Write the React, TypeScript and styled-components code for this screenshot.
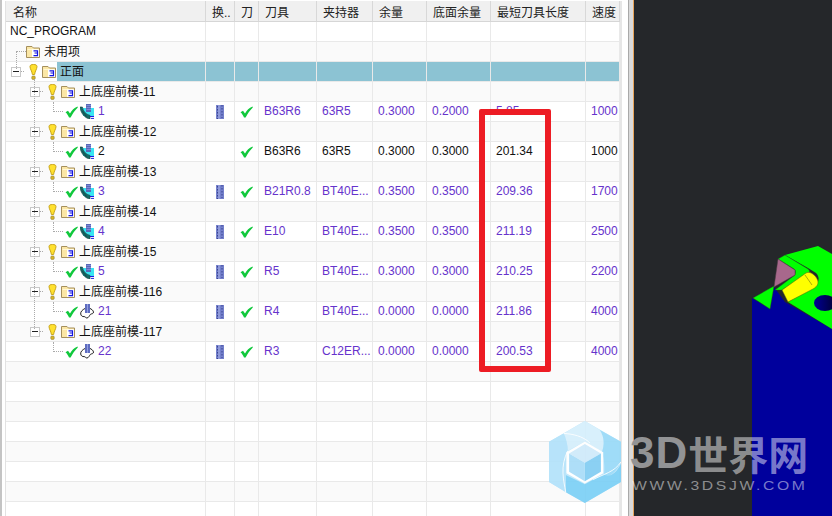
import styled, { createGlobalStyle } from "styled-components";

const GlobalStyle = createGlobalStyle`
  html, body {
    margin: 0;
    padding: 0;
    width: 832px;
    height: 516px;
    overflow: hidden;
    background: #fff;
  }
`;

const Page = styled.div`
  display: flex;
  position: relative;
  width: 832px;
  height: 516px;
  overflow: hidden;
  font-family: "Liberation Sans", "Noto Sans CJK SC", sans-serif;
  font-size: 12px;
  color: #111;
`;

const TablePane = styled.div`
  width: 628px;
  height: 516px;
  flex: none;
  box-sizing: border-box;
  border-left: 2px solid #c4c4c4;
  padding: 1px 6px 0 3px;
  background: #fff;
`;

const Table = styled.div`
  position: relative;
  height: 100%;
  overflow: hidden;
  border-left: 1px solid #e2e2e2;
  border-right: 2px solid #e6e6e6;
`;

const Sash = styled.div`
  width: 5px;
  flex: none;
  background: #dadada;
  border-left: 1px solid #a9a9a9;
  box-sizing: border-box;
`;

const Viewport = styled.div`
  flex: 1;
  background: #25272a;
  border-left: 1px solid #e8a45a;
  min-width: 0;

  > svg {
    display: block;
    width: 100%;
    height: 100%;
  }
`;

const columns = "200px 29px 24px 58px 56px 54px 64px 95px 34px";

const HeaderRow = styled.div`
  display: grid;
  grid-template-columns: ${columns};
  height: 21px;
  box-sizing: border-box;
  background: #f0f0f0;
  border-bottom: 1px solid #d6d6d6;
`;

const HeaderCell = styled.div`
  display: flex;
  align-items: center;
  padding-left: 6px;
  border-right: 1px solid #d8d8d8;
  box-sizing: border-box;
  white-space: nowrap;
  overflow: hidden;
  color: #222;

  &:first-child {
    padding-left: 7px;
  }
`;

const Row = styled.div<{ $odd: boolean }>`
  display: grid;
  grid-template-columns: ${columns};
  height: 20px;
  box-sizing: border-box;
  border-bottom: 1px solid #e9e9e9;
  background: ${(p) => (p.$odd ? "#fafafa" : "#fff")};
`;

const Cell = styled.div<{ $selected?: boolean; $active?: boolean }>`
  display: flex;
  align-items: center;
  padding: 0 0 2px 5px;
  box-sizing: border-box;
  border-right: 1px solid #e9e9e9;
  white-space: nowrap;
  overflow: hidden;
  color: ${(p) => (p.$active ? "#6633cc" : "#111")};
  background: ${(p) => (p.$selected ? "#8cc3d3" : "transparent")};
`;

const IconCell = styled.div<{ $selected?: boolean }>`
  display: flex;
  align-items: center;
  justify-content: center;
  box-sizing: border-box;
  border-right: 1px solid #e9e9e9;
  background: ${(p) => (p.$selected ? "#8cc3d3" : "transparent")};
`;

const NameCell = styled.div<{ $indent: number }>`
  display: flex;
  align-items: center;
  height: 19px;
  padding-left: ${(p) => p.$indent}px;
  box-sizing: border-box;
  border-right: 1px solid #e9e9e9;
  white-space: nowrap;
  overflow: hidden;
`;

const NameLabel = styled.span<{ $selected?: boolean; $active?: boolean }>`
  flex: 1;
  align-self: stretch;
  display: flex;
  align-items: center;
  margin-left: 1px;
  padding: 0 0 2px 3px;
  color: ${(p) => (p.$active ? "#6633cc" : "#111")};
  background: ${(p) => (p.$selected ? "#8cc3d3" : "transparent")};
`;

const RootLabel = styled.span`
  margin-bottom: 2px;
  color: #111;
`;

const Expander = styled.span`
  position: relative;
  width: 10px;
  height: 10px;
  flex: none;
  box-sizing: border-box;
  border: 1px solid #c9c9c9;
  background: #fff;

  &::after {
    content: "";
    position: absolute;
    left: 1px;
    right: 1px;
    top: 3px;
    height: 1px;
    background: #222;
  }
`;

const Stub = styled.span<{ $width: number; $gap: number }>`
  width: ${(p) => p.$width}px;
  margin-right: ${(p) => p.$gap}px;
  flex: none;
  height: 0;
  border-bottom: 1px dotted #aaa;
`;

const Elbow = styled.span`
  width: 10px;
  height: 10px;
  margin-right: 2px;
  flex: none;
  align-self: flex-start;
  box-sizing: border-box;
  border-left: 1px dotted #aaa;
  border-bottom: 1px dotted #aaa;
`;

// tree guides run across several rows, so they sit on top of the table
const TreeGuide = styled.span<{ $left: number; $top: number; $height: number }>`
  position: absolute;
  left: ${(p) => p.$left}px;
  top: ${(p) => p.$top}px;
  height: ${(p) => p.$height}px;
  border-left: 1px dotted #aaa;
`;

const IconSlot = styled.svg<{ $gap?: number }>`
  display: block;
  flex: none;
  margin-right: ${(p) => p.$gap ?? 0}px;
`;

const RedBox = styled.div`
  position: absolute;
  left: 479px;
  top: 109px;
  width: 72px;
  height: 263px;
  box-sizing: border-box;
  border: 6px solid #ed1c24;
  border-radius: 2px;
`;

const Watermark = styled.div`
  position: absolute;
  left: 549px;
  top: 421px;
  display: flex;
  gap: 9px;
  pointer-events: none;
`;

const LogoMark = styled.svg`
  display: block;
  width: 72px;
  height: 82px;
  flex: none;
  opacity: 0.92;
`;

const Brand = styled.div`
  display: flex;
  flex-direction: column;
  color: rgba(255, 255, 255, 0.49);
`;

const BrandTitle = styled.div`
  display: flex;
  align-items: center;
  height: 40px;
  margin-top: 12px;
  font-weight: 700;
  white-space: nowrap;
`;

const BrandLatin = styled.span`
  font-family: "Liberation Sans", sans-serif;
  font-size: 44px;
  line-height: 40px;
  letter-spacing: 1px;
  color: #929395;
`;

const BrandCjk = styled.span`
  font-family: "Noto Sans CJK SC", sans-serif;
  font-size: 40px;
  line-height: 40px;
`;

const BrandUrl = styled.div`
  margin: 6px 0 0 2px;
  font-family: "Liberation Sans", sans-serif;
  font-size: 12px;
  line-height: 14px;
  letter-spacing: 2px;
  white-space: nowrap;
  transform: scaleX(1.31);
  transform-origin: left center;
`;

const Bulb = () => (
  <IconSlot width="9" height="16" viewBox="0 0 9 16" $gap={4}>
    <path d="M1 2.5C1 1 2.5.5 4.5.5S8 1 8 2.5C8 5 6 7 5.6 10.5H3.4C3 7 1 5 1 2.5Z" fill="#ffe12e" stroke="#c8a41a" />
    <rect x="2.8" y="12" width="3.4" height="3.4" rx="1" fill="#d9b526" stroke="#8f8440" strokeWidth=".6" />
  </IconSlot>
);

const Folder = () => (
  <IconSlot width="14" height="13" viewBox="0 0 14 13">
    <path d="M.5 12.5V1.5H6L7.5 3H13.5V12.5Z" fill="#fbe7a6" stroke="#a58f5c" />
    <rect x="1.5" y="4" width="11" height="1" fill="#fff6d2" />
    <rect x="6" y="4.5" width="7" height="7.5" fill="#fff" />
    <path d="M7.5 5.8H11.5V8H8.5M8.5 8H11.5V10.6H7.5" fill="none" stroke="#1414e0" strokeWidth="1.2" />
  </IconSlot>
);

const Check = ({ gap = 0 }: { gap?: number }) => (
  <IconSlot width="13" height="12" viewBox="0 0 13 12" $gap={gap}>
    <path d="M.5 6.2L3 4.8L5 7.4C6.8 4.4 9 2 12.6.6L12.8 1.4C10 4 7.6 7.6 5.6 11.6H4C3.2 9.4 2 7.6.5 6.2Z" fill="#10c83c" />
  </IconSlot>
);

const OpIcon = ({ finish }: { finish: boolean }) =>
  finish ? (
    <IconSlot width="14" height="15" viewBox="0 0 14 15">
      <path d="M.7 10C.4 7.5 2.5 5.8 5 4.5C7 3.6 9 3.5 11 5C13 6.2 13.8 7.5 13.3 9C12.6 10 11.4 9.6 10.4 10.4C9.4 11.4 9 13.6 7 14C5.6 14.2 5.4 12.4 4 12.6C2.4 12.8 1 11.8.7 10Z" fill="#fff" stroke="#222" />
      <rect x="5" y="0" width="5" height="9" fill="#5f6dc0" />
      <path d="M7.5 0V9" stroke="#94a0e0" />
    </IconSlot>
  ) : (
    <IconSlot width="14" height="15" viewBox="0 0 14 15">
      <rect x="3" y="4" width="11" height="8" fill="#38e4f2" />
      <path d="M0 3H2.4C3 7 5.6 10.4 10 11.4V15C5 14.5 .5 9 0 3Z" fill="#176a66" stroke="#0d3f3c" strokeWidth=".6" />
      <path d="M2.6 7.5L6.5 12.5" stroke="#0d3f3c" strokeDasharray="1.4 1" />
      <rect x="6" y="0" width="5" height="8" fill="#5a68b8" />
      <path d="M6.5 1.5H11M6.5 3.5H11M6.5 5.5H11" stroke="#7f8bd8" />
      <path d="M10 12.5H14M11 14.4H14" stroke="#1c1ce0" />
    </IconSlot>
  );

const ToolChange = () => (
  <IconSlot width="8" height="14" viewBox="0 0 8 14">
    <rect width="8" height="14" fill="#7480cc" />
    <path d="M1.5 1V14M6 0V13" stroke="#3a4590" strokeDasharray="1.5 1.5" />
    <path d="M3 0V14" stroke="#a9b2e6" />
  </IconSlot>
);

const Logo = () => (
  <LogoMark viewBox="28 63 215 245">
    <path d="M135 63L243 125V245L135 308L28 245V125Z" fill="#bfe7fb" />
    <path d="M72 100L135 63L180 90C194 112 194 135 186 156L135 124L84 152C84 132 78 114 72 100Z" fill="#d5effc" />
    <path d="M180 90L243 125V185C232 212 210 230 190 238C196 210 194 180 186 156C194 135 194 112 180 90Z" fill="#98daf8" />
    <path d="M78 224L135 252L190 222C205 232 226 226 243 190V245L135 308L78 276Z" fill="#7cd0f6" />
    <path d="M28 125L72 100C78 114 84 132 84 152L78 160V224V276L28 245Z" fill="#b2e2fa" />
    <path d="M72 100C100 102 128 108 150 128M243 185C225 215 190 222 160 238M78 276C72 240 60 200 84 152" fill="none" stroke="#fff" strokeWidth="2.5" />
    <path d="M135 124L190 156V219L135 250L80 219V156Z" fill="#fff" />
    <path d="M135 132L183 160L135 188L88 160Z" fill="#cfeafb" />
    <path d="M88 160L135 188V243L88 215Z" fill="#a8dcf8" />
    <path d="M183 160L135 188V243L183 215Z" fill="#82cdf3" />
  </LogoMark>
);

const Model = () => (
  <svg viewBox="634 0 198 516">
    <defs>
      <linearGradient id="hole" x1="0" x2="1">
        <stop offset="0" stopColor="#000096" />
        <stop offset="1" stopColor="#000030" />
      </linearGradient>
    </defs>
    <path d="M752 516V298L770 309L774 287L785 302L832 329V516Z" fill="#00009c" />
    <path d="M753 298L774 286L770 309Z" fill="#00ff00" stroke="#1c5a20" strokeWidth=".4" />
    <path d="M785 255L818 246L832 254V329L788 302L812 288C820 283 820 277 816 273L808 268Z" fill="#00ff00" />
    <path d="M778 259L785 255L808 269C811 272 809 272 807 274L782 290H775L795 275C796 270 795 270 794 269Z" fill="#00ff00" stroke="#1c5a20" strokeWidth=".4" />
    <path d="M778 259L795 270L795 275L774 287Z" fill="#a8688c" stroke="#4c3a44" strokeWidth=".5" />
    <path d="M782 290L806 273C811 270 818 278 818 282C818 286 815 288 811 290L788 302Z" fill="#ffff00" stroke="#545c10" strokeWidth=".5" />
    <path d="M805 275L812 285" stroke="#545c10" strokeWidth=".5" />
    <ellipse cx="825" cy="303" rx="11" ry="8" fill="url(#hole)" />
  </svg>
);

type Kind = "root" | "unused" | "view" | "group" | "op";

interface Program {
  kind: Kind;
  name: string;
  swap?: boolean;
  tool?: string;
  holder?: string;
  stock?: string;
  floor?: string;
  length?: string;
  speed?: string;
  active?: boolean;
  finish?: boolean;
}

const op = (
  name: string,
  tool: string,
  holder: string,
  stock: string,
  floor: string,
  length: string,
  speed: string,
  extra: Partial<Program> = {},
): Program => ({ kind: "op", name, swap: true, tool, holder, stock, floor, length, speed, active: true, ...extra });

const group = (name: string): Program => ({ kind: "group", name });

const rows: Program[] = [
  { kind: "root", name: "NC_PROGRAM" },
  { kind: "unused", name: "未用项" },
  { kind: "view", name: "正面" },
  group("上底座前模-11"),
  op("1", "B63R6", "63R5", "0.3000", "0.2000", "5.85", "1000"),
  group("上底座前模-12"),
  op("2", "B63R6", "63R5", "0.3000", "0.3000", "201.34", "1000", { swap: false, active: false }),
  group("上底座前模-13"),
  op("3", "B21R0.8", "BT40E...", "0.3500", "0.3500", "209.36", "1700"),
  group("上底座前模-14"),
  op("4", "E10", "BT40E...", "0.3500", "0.3500", "211.19", "2500"),
  group("上底座前模-15"),
  op("5", "R5", "BT40E...", "0.3000", "0.3000", "210.25", "2200"),
  group("上底座前模-116"),
  op("21", "R4", "BT40E...", "0.0000", "0.0000", "211.86", "4000", { finish: true }),
  group("上底座前模-117"),
  op("22", "R3", "C12ER...", "0.0000", "0.0000", "200.53", "4000", { finish: true }),
];

const totalRows = 25;
const headers = ["名称", "换..", "刀", "刀具", "夹持器", "余量", "底面余量", "最短刀具长度", "速度"];
const indents: Record<Kind, number> = { root: 4, unused: 10, view: 5, group: 24, op: 47 };

const NameContent = ({ row }: { row: Program }) => {
  switch (row.kind) {
    case "root":
      return <RootLabel>{row.name}</RootLabel>;
    case "unused":
      return (
        <>
          <Stub $width={10} $gap={0} />
          <Folder />
          <NameLabel>{row.name}</NameLabel>
        </>
      );
    case "op":
      return (
        <>
          <Elbow />
          <Check gap={2} />
          <OpIcon finish={!!row.finish} />
          <NameLabel $active={row.active}>{row.name}</NameLabel>
        </>
      );
    default:
      return (
        <>
          <Expander />
          <Stub $width={3} $gap={5} />
          <Bulb />
          <Folder />
          <NameLabel $selected={row.kind === "view"}>{row.name}</NameLabel>
        </>
      );
  }
};

const ProgramRow = ({ row, index }: { row?: Program; index: number }) => {
  const selected = row?.kind === "view";
  const active = row?.active;
  const values = [row?.tool, row?.holder, row?.stock, row?.floor, row?.length, row?.speed];
  return (
    <Row $odd={index % 2 === 1}>
      <NameCell $indent={row ? indents[row.kind] : 0}>{row && <NameContent row={row} />}</NameCell>
      <IconCell $selected={selected}>{row?.swap && <ToolChange />}</IconCell>
      <IconCell $selected={selected}>{row?.kind === "op" && <Check />}</IconCell>
      {values.map((value, i) => (
        <Cell key={i} $selected={selected} $active={active}>
          {value}
        </Cell>
      ))}
    </Row>
  );
};

export default function App() {
  return (
    <Page>
      <GlobalStyle />
      <TablePane>
        <Table>
          <HeaderRow>
            {headers.map((h) => (
              <HeaderCell key={h}>{h}</HeaderCell>
            ))}
          </HeaderRow>
          {Array.from({ length: totalRows }, (_, i) => (
            <ProgramRow key={i} row={rows[i]} index={i} />
          ))}
          <TreeGuide $left={10} $top={51} $height={17} />
          <TreeGuide $left={28} $top={78} $height={250} />
        </Table>
      </TablePane>
      <Sash />
      <Viewport>
        <Model />
      </Viewport>
      <RedBox />
      <Watermark>
        <Logo />
        <Brand>
          <BrandTitle>
            <BrandLatin>3D</BrandLatin>
            <BrandCjk>世界网</BrandCjk>
          </BrandTitle>
          <BrandUrl>WWW.3DSJW.COM</BrandUrl>
        </Brand>
      </Watermark>
    </Page>
  );
}
